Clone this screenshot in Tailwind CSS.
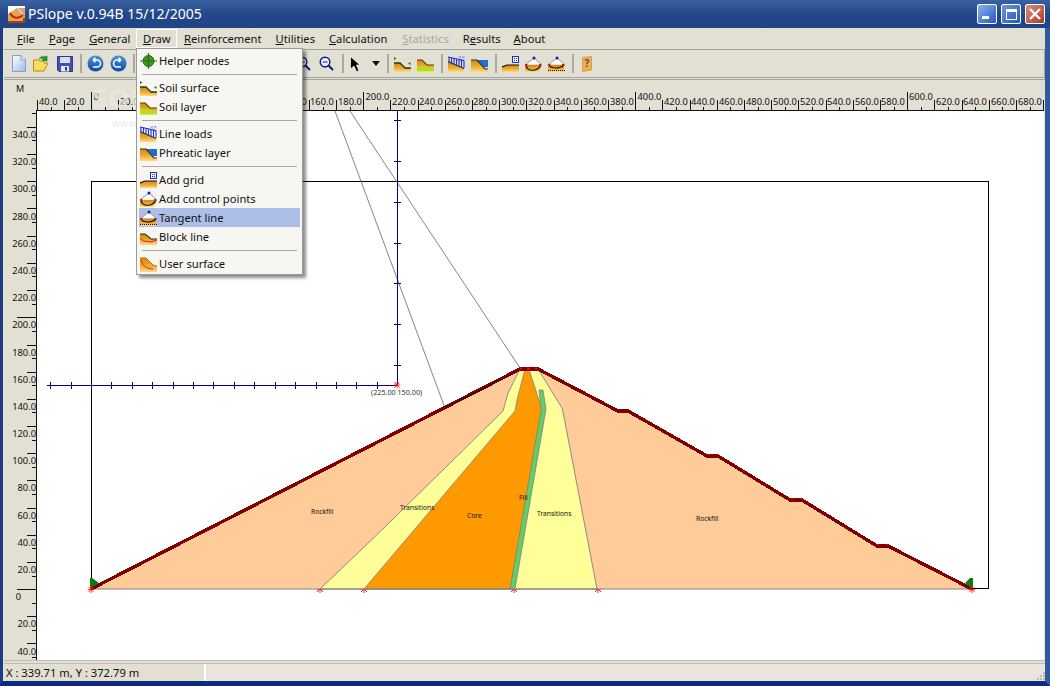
<!DOCTYPE html>
<html>
<head>
<meta charset="utf-8">
<script src="https://cdn.jsdelivr.net/npm/@tailwindcss/browser@4"></script>
</head>
<body class="w-[1050px] h-[686px] overflow-hidden bg-[#24478a] font-['Noto_Sans'] text-[#111]">
<svg width="0" height="0" class="absolute">
<defs>
<linearGradient id="g" x1="0" y1="0" x2="0" y2="1"><stop offset="0" stop-color="#d98606"/><stop offset=".6" stop-color="#f0ad3a"/><stop offset="1" stop-color="#fcdc8a"/></linearGradient>
<linearGradient id="bl" x1="0" y1="0" x2="0" y2="1"><stop offset="0" stop-color="#4c95df"/><stop offset="1" stop-color="#0d4aa6"/></linearGradient>
<linearGradient id="pg" x1="0" y1="0" x2="1" y2="1"><stop offset="0" stop-color="#fff"/><stop offset="1" stop-color="#9dbbe8"/></linearGradient>
<symbol id="surface" viewBox="0 0 17 16"><path d="M0 7H6L11 12H17V16H0Z" fill="url(#g)"/><path d="M0 7H6L11 12H17" fill="none" stroke="#27360e" stroke-width="1.300"/><path d="M0 1L2.500 2.500L0 4ZM16.500 6L14 7.500L16.500 9Z" fill="#0a8a0a"/></symbol>
<symbol id="layer" viewBox="0 0 17 16"><path d="M0 4H5L10 9H17V16H0Z" fill="url(#g)"/><path d="M0 4H5L10 9H17" fill="none" stroke="#5a3c10" stroke-width="1.200"/><path d="M0 10H9L12 12H17V15H0Z" fill="#b6de1c"/><path d="M0 15H17V16H0Z" fill="#e8e84a"/></symbol>
<symbol id="loads" viewBox="0 0 17 16"><path d="M0 6L16 13V16H0Z" fill="url(#g)"/><path d="M0 5.500L16 12.500" stroke="#27360e" fill="none" stroke-width="1.200"/><path d="M1 1.500V6M3.500 2V7M6 2.500V8M8.500 3V9M11 3.500V10M13.500 4V11M16 4.500V12M0 1L16 4.500" stroke="#1c2fe0" stroke-width="1.100" fill="none"/><path d="M10.500 0L13 2.500M13 0L10.500 2.500M14 0L16.500 2.500M16.500 0L14 2.500" stroke="#7f88f0" stroke-width=".8"/></symbol>
<symbol id="phreatic" viewBox="0 0 17 16"><path d="M0 4H6L15 14H17V16H0Z" fill="url(#g)"/><path d="M6 4H17V11H13Z" fill="#1d6fd6"/><path d="M0 4H6L14 13H17" fill="none" stroke="#27360e" stroke-width="1.200"/></symbol>
<symbol id="grid" viewBox="0 0 17 16"><path d="M0 11L5 9H17V16H0Z" fill="url(#g)"/><path d="M0 11L5 9H17" fill="none" stroke="#111" stroke-width="1.200"/><rect x="10.500" y=".5" width="6" height="6" fill="#f4f6ff" stroke="#1c2fd0"/><path d="M12 2h1v1h-1zM14 2h1v1h-1zM12 4h1v1h-1zM14 4h1v1h-1z" fill="#1c2fd0"/></symbol>
<symbol id="ctrl" viewBox="0 0 17 16"><path d="M0 9H16V12L13 16H1L0 15Z" fill="url(#g)"/><path d="M1 9C2 16 12 16 16 9" fill="none" stroke="#111" stroke-width="1.200"/><path d="M1 8L9 2L16 8" fill="#fbfbf4" stroke="#999"/><circle cx="9" cy="2" r="1.500" fill="#1414d8"/><path d="M0 8h2.500v1.500H0zM14 8H16.500v1.500h-2.500z" fill="#e01818"/></symbol>
<symbol id="tangent" viewBox="0 0 17 16"><path d="M0 9H16V16H0Z" fill="url(#g)"/><path d="M1 9C3 13 12 13 16 9" fill="none" stroke="#111" stroke-width="1.100"/><path d="M0 14.500H17" stroke="#111" stroke-dasharray="1 1"/><path d="M1 8L9 2L16 8" fill="#fbfbf4" stroke="#999"/><circle cx="9" cy="2" r="1.500" fill="#1414d8"/><path d="M0 8h2.500v1.500H0zM14 8H16.500v1.500h-2.500z" fill="#e01818"/></symbol>
<symbol id="block" viewBox="0 0 17 16"><path d="M0 5H5L11 10H17V16H0Z" fill="url(#g)"/><path d="M0 5H5L11 10H17" fill="none" stroke="#27360e" stroke-width="1.200"/><path d="M0 9L4 12L11 13L17 11" fill="none" stroke="#e02020"/></symbol>
<symbol id="user" viewBox="0 0 17 16"><path d="M0 2H6L13 9L17 10V16H0Z" fill="url(#g)"/><path d="M0 2H6L13 9L17 10" fill="none" stroke="#a07820"/><path d="M1 4C3 10 7 13 13 13" fill="none" stroke="#e02020"/></symbol>
<symbol id="star" viewBox="-4 -4 8 8"><path d="M-3 -3L3 3M3 -3L-3 3M0 -4V4M-4 0H4" stroke="#f00" stroke-width=".9"/></symbol>
</defs>
</svg>

<div class="w-[1050px] h-[686px] flex flex-col relative">
  <!-- title bar -->
  <div class="h-[28px] shrink-0 flex items-center bg-gradient-to-b from-[#3a629f] via-[#24478a] to-[#1f4488] pl-[8px] pr-[5px]">
    <svg width="17" height="17" viewBox="0 0 17 17" class="shrink-0"><rect width="17" height="17" fill="#e9a154"/><path d="M0 8L9 2L17 2V0H0Z" fill="#fff"/><path d="M2 7C5 13 11 13 15 9" stroke="#c02810" stroke-width="2" fill="none"/><path d="M0 16L16 16L16 12" stroke="#a8400c" stroke-width="2" fill="none"/><path d="M9 2L15 8" stroke="#c8c8d0" stroke-width="2"/></svg>
    <span class="ml-[3px] text-[14px] text-white leading-none">PSlope v.0.94B 15/12/2005</span>
    <div class="ml-auto flex gap-[4px]">
      <div class="w-[20px] h-[20px] border border-white rounded-[2px] bg-gradient-to-br from-[#8fb0e6] to-[#1c5bc4] flex items-end pl-[4px] pb-[4px]"><div class="w-[7px] h-[3px] bg-white"></div></div>
      <div class="w-[20px] h-[20px] border border-white rounded-[2px] bg-gradient-to-br from-[#6f96dc] to-[#2058bc] flex items-center justify-center"><div class="w-[11px] h-[11px] border border-white border-t-[3px]"></div></div>
      <div class="w-[20px] h-[20px] border border-white rounded-[2px] bg-gradient-to-br from-[#d9907a] to-[#a8382a] flex items-center justify-center"><svg width="14" height="14" viewBox="0 0 14 14"><path d="M2 2L12 12M12 2L2 12" stroke="#fff" stroke-width="2.400"/></svg></div>
    </div>
  </div>

  <!-- client + window borders -->
  <div class="flex-1 flex border-l-[3px] border-l-[#1c3c80] border-r-[5px] border-r-[#2f5a9e] border-b-[5px] border-b-[#0f2a7a] bg-[#e2dfd3] min-h-0">
    <div class="flex-1 flex flex-col min-w-0 border-l border-l-[#e2dfd3]">
      <!-- menu bar -->
      <div class="h-[21px] shrink-0 flex items-center pl-[6px] text-[11.2px] leading-none">
        <span class="px-[7px]"><u>F</u>ile</span>
        <span class="px-[7px]"><u>P</u>age</span>
        <span class="px-[7px]"><u>G</u>eneral</span>
        <span class="ml-[-1px] px-[5.5px] h-[19px] flex items-center border border-white"><span><u>D</u>raw</span></span>
        <span class="px-[7px]"><u>R</u>einforcement</span>
        <span class="px-[7px]"><u>U</u>tilities</span>
        <span class="px-[7px]"><u>C</u>alculation</span>
        <span class="ml-[1px] px-[7px] text-[#a9a8a3]"><u>S</u>tatistics</span>
        <span class="px-[7px]">R<u>e</u>sults</span>
        <span class="ml-[-1px] px-[7px]"><u>A</u>bout</span>
      </div>
      <!-- toolbar -->
      <div class="h-[29px] shrink-0 border border-[#a5a39d] border-l-0 flex items-center pl-[8px]">
        <svg width="14" height="17" viewBox="0 0 14 17"><path d="M.5.500H9L13.500 5V16.500H.5Z" fill="url(#pg)" stroke="#7f9ed6"/><path d="M9 .5V5H13.500" fill="#dfe9fb" stroke="#7f9ed6"/></svg>
        <svg width="16" height="17" viewBox="0 0 16 17" class="ml-[7px]"><path d="M.5 5H6L7 6H11V8H15L11 16H.5Z" fill="#fbdc5e" stroke="#b88a10"/><path d="M6 4C8 1 11 1 12 2L14 1V6L9 5L11 3.500" fill="#1c9a2c" stroke="#106a1c" stroke-width=".6"/></svg>
        <svg width="16" height="16" viewBox="0 0 16 16" class="ml-[8px]"><path d="M.5.500H15.500V15.500H2L.5 14Z" fill="#4050b4" stroke="#2c3890"/><rect x="3" y="1" width="10" height="6" fill="#d8dcf0"/><rect x="4" y="10" width="8" height="5.500" fill="#e8e8f0"/><rect x="8" y="11" width="2" height="3.500" fill="#2c3890"/></svg>
        <div class="w-[2px] h-[19px] bg-[#a9a8a3] ml-[7px]"></div>
        <svg width="17" height="17" viewBox="0 0 17 17" class="ml-[5px]"><circle cx="8.500" cy="8.500" r="8" fill="url(#bl)"/><path d="M6 5H10A3 3 0 0 1 10 12H6M6 5L8.500 2.800M6 5L8.500 7.200" stroke="#fff" stroke-width="1.500" fill="none"/></svg>
        <svg width="17" height="17" viewBox="0 0 17 17" class="ml-[6px]"><circle cx="8.500" cy="8.500" r="8" fill="url(#bl)"/><path d="M11 5H7A3 3 0 0 0 7 12H11M11 5L8.500 2.800M11 5L8.500 7.200" stroke="#fff" stroke-width="1.500" fill="none"/></svg>
        <div class="w-[2px] h-[19px] bg-[#a9a8a3] ml-[6px]"></div>
        <svg width="15" height="15" viewBox="0 0 15 15" class="ml-[161px]"><circle cx="6" cy="6" r="4.800" fill="#eef" stroke="#0c1a80" stroke-width="1.400"/><path d="M9.500 9.500L14 14" stroke="#0c1a80" stroke-width="2"/><path d="M3.500 6H8.500M6 3.500V8.500" stroke="#0c1a80"/></svg>
        <svg width="15" height="15" viewBox="0 0 15 15" class="ml-[8px]"><circle cx="6" cy="6" r="4.800" fill="#eef" stroke="#0c1a80" stroke-width="1.400"/><path d="M9.500 9.500L14 14" stroke="#0c1a80" stroke-width="2"/><path d="M3.500 6H8.500" stroke="#0c1a80"/></svg>
        <div class="w-[2px] h-[19px] bg-[#a9a8a3] ml-[8px]"></div>
        <svg width="11" height="16" viewBox="0 0 11 16" class="ml-[6px]"><path d="M.5.500L10 9H6.500L9 15L6.500 15.500L4 10L.5 13Z" fill="#000" stroke="#fff" stroke-width=".7"/></svg>
        <svg width="8" height="5" viewBox="0 0 8 5" class="ml-[11px]"><path d="M0 0H8L4 5Z" fill="#111"/></svg>
        <div class="w-[2px] h-[19px] bg-[#a9a8a3] ml-[7px]"></div>
        <svg width="17" height="16" class="ml-[5px]"><use href="#surface"/></svg>
        <svg width="17" height="16" class="ml-[6px]"><use href="#layer"/></svg>
        <div class="w-[2px] h-[19px] bg-[#a9a8a3] ml-[7px]"></div>
        <svg width="17" height="16" class="ml-[5px]"><use href="#loads"/></svg>
        <svg width="17" height="16" class="ml-[6px]"><use href="#phreatic"/></svg>
        <div class="w-[2px] h-[19px] bg-[#a9a8a3] ml-[7px]"></div>
        <svg width="17" height="16" class="ml-[5px]"><use href="#grid"/></svg>
        <svg width="17" height="16" class="ml-[6px]"><use href="#ctrl"/></svg>
        <svg width="17" height="16" class="ml-[6px]"><use href="#tangent"/></svg>
        <div class="w-[2px] h-[19px] bg-[#a9a8a3] ml-[7px]"></div>
        <svg width="10" height="16" viewBox="0 0 10 16" class="ml-[8px]"><path d="M.5 1.500L9.500.500V14L.5 15.500Z" fill="#f0b050" stroke="#e0a040"/><text x="2.500" y="11" font-size="10" font-weight="700" fill="#5a4a70">?</text></svg>
      </div>
      <div class="h-[2px] shrink-0 border-b border-[#a5a39d]"></div>

      <!-- ruler + canvas -->
      <div class="flex-1 flex flex-col min-h-0 relative">
        <div class="h-[31px] shrink-0 flex">
          <div class="w-[32px] shrink-0 relative"><span class="absolute left-[12px] top-[2px] text-[9px] leading-[14px]">M</span></div>
          <svg width="1008" height="31" viewBox="36 80 1008 31" class="block shrink-0" font-size="9.300" fill="#111">
            <path shape-rendering="crispEdges" stroke="#111" fill="none" d="M37.500 100V110M64.500 100V110M91.500 92V110M118.500 100V110M146.500 100V110M173.500 100V110M200.500 100V110M227.500 100V110M254.500 100V110M282.500 100V110M309.500 100V110M336.500 100V110M363.500 92V110M390.500 100V110M418.500 100V110M445.500 100V110M472.500 100V110M499.500 100V110M526.500 100V110M554.500 100V110M581.500 100V110M608.500 100V110M635.500 92V110M662.500 100V110M690.500 100V110M717.500 100V110M744.500 100V110M771.500 100V110M798.500 100V110M826.500 100V110M853.500 100V110M880.500 100V110M907.500 92V110M934.500 100V110M962.500 100V110M989.500 100V110M1016.500 100V110M1043.500 100V110M51.500 107V110M78.500 107V110M105.500 107V110M132.500 107V110M159.500 107V110M187.500 107V110M214.500 107V110M241.500 107V110M268.500 107V110M295.500 107V110M323.500 107V110M350.500 107V110M377.500 107V110M404.500 107V110M431.500 107V110M458.500 107V110M486.500 107V110M513.500 107V110M540.500 107V110M567.500 107V110M594.500 107V110M622.500 107V110M649.500 107V110M676.500 107V110M703.500 107V110M730.500 107V110M758.500 107V110M785.500 107V110M812.500 107V110M839.500 107V110M866.500 107V110M894.500 107V110M921.500 107V110M948.500 107V110M975.500 107V110M1002.500 107V110M1030.500 107V110"/>
            <path shape-rendering="crispEdges" d="M36 110H1044V111H36Z" fill="#111"/>
            <text x="39" y="105">40.0</text><text x="66" y="105">20.0</text><text x="93.500" y="99.500">0</text><text x="120" y="105">20.0</text><text x="148" y="105">40.0</text><text x="175" y="105">60.0</text><text x="202" y="105">80.0</text>
            <text x="229" y="105">100.0</text><text x="256" y="105">120.0</text><text x="283" y="105">140.0</text><text x="310" y="105">160.0</text><text x="338" y="105">180.0</text><text x="365.500" y="99.500">200.0</text><text x="392" y="105">220.0</text><text x="419" y="105">240.0</text><text x="446" y="105">260.0</text><text x="473" y="105">280.0</text><text x="501" y="105">300.0</text><text x="528" y="105">320.0</text><text x="555" y="105">340.0</text><text x="583" y="105">360.0</text><text x="610" y="105">380.0</text><text x="637.500" y="99.500">400.0</text><text x="664" y="105">420.0</text><text x="691" y="105">440.0</text><text x="719" y="105">460.0</text><text x="746" y="105">480.0</text><text x="773" y="105">500.0</text><text x="800" y="105">520.0</text><text x="827" y="105">540.0</text><text x="855" y="105">560.0</text><text x="881" y="105">580.0</text><text x="909" y="99.500">600.0</text><text x="936" y="105">620.0</text><text x="963" y="105">640.0</text><text x="991" y="105">660.0</text><text x="1018" y="105">680.0</text>
          </svg>
        </div>
        <div class="flex-1 flex min-h-0">
          <svg width="32" height="549" viewBox="4 111 32 549" class="block shrink-0" font-size="9.300" fill="#111" text-anchor="end">
            <path shape-rendering="crispEdges" stroke="#111" fill="none" d="M27 127.500H36M27 154.500H36M27 181.500H36M27 208.500H36M27 236.500H36M27 263.500H36M27 290.500H36M17 317.500H36M27 345.500H36M27 372.500H36M27 399.500H36M27 426.500H36M27 453.500H36M27 480.500H36M27 508.500H36M27 535.500H36M27 562.500H36M17 589.500H36M27 616.500H36M27 643.500H36M32 113.500H36M32 140.500H36M32 168.500H36M32 195.500H36M32 222.500H36M32 249.500H36M32 276.500H36M32 304.500H36M32 331.500H36M32 358.500H36M32 385.500H36M32 412.500H36M32 440.500H36M32 467.500H36M32 494.500H36M32 521.500H36M32 548.500H36M32 576.500H36M32 603.500H36M32 630.500H36M32 657.500H36"/>
            <text x="36" y="138">340.0</text><text x="36" y="165">320.0</text><text x="36" y="192">300.0</text><text x="36" y="219.500">280.0</text><text x="36" y="247">260.0</text><text x="36" y="274">240.0</text><text x="36" y="301">220.0</text><text x="36" y="328">200.0</text><text x="36" y="356">180.0</text><text x="36" y="383">160.0</text><text x="36" y="410">140.0</text><text x="36" y="437">120.0</text><text x="36" y="464">100.0</text><text x="36" y="491">80.0</text><text x="36" y="519">60.0</text><text x="36" y="546">40.0</text><text x="36" y="573">20.0</text><text x="21" y="600">0</text><text x="36" y="627">20.0</text><text x="36" y="654.500">40.0</text>
          </svg>
          <svg width="1008" height="549" viewBox="36 111 1008 549" class="block shrink-0 bg-white" font-size="6.700" fill="#111">
            <path d="M36 111V660" stroke="#111" stroke-width="1.500" shape-rendering="crispEdges"/>
            <rect x="91.500" y="181.500" width="897" height="407" fill="none" stroke="#000" stroke-width="1.200" shape-rendering="crispEdges"/>
            <path d="M335 111L445 408M350 111L520 368" stroke="#666" stroke-width=".8" fill="none"/>
            <!-- base points sit behind the materials, so only their lower half shows -->
            <use href="#star" x="316" y="585" width="8" height="8"/><use href="#star" x="360" y="585" width="8" height="8"/><use href="#star" x="510" y="585" width="8" height="8"/><use href="#star" x="594" y="585" width="8" height="8"/>
            <!-- materials -->
            <path d="M91 589L520 369H538L618 411H628L707 456H718L790 500H802L877 546H888L972 589Z" fill="#ffcc99"/>
            <path d="M320 589L360 551L390 522L503 411L508 393L520 369H538L562 408L564 417L597 589Z" fill="#ffff99" stroke="#808080" stroke-width=".9"/>
            <path d="M364 589L515 411L517 400L525 369H529L542 410L540 430L510 589Z" fill="#ff9900" stroke="#808080" stroke-width=".8"/>
            <path d="M539 390H543L546 409L515 589H510L541 410Z" fill="#66cc66" stroke="#808080" stroke-width=".8"/>
            <path d="M91 589H972" stroke="#808080" stroke-width="1.200"/>
            <path d="M91 589L520 369H538L618 411H628L707 456H718L790 500H802L877 546H888L972 589" fill="none" stroke="#800000" stroke-width="3.400" shape-rendering="crispEdges"/>
            <path d="M445 408L510 375" stroke="#111" stroke-width="1.200" stroke-dasharray="3 1" fill="none"/>
            <!-- axes -->
            <g stroke="#000080" fill="none" shape-rendering="crispEdges">
              <path d="M397.500 111V385.500H47" stroke-width="1.200"/>
              <path d="M394 120.500H401M394 161.500H401M394 202.500H401M394 243.500H401M394 283.500H401M394 324.500H401M394 365.500H401M50.500 382V389M71.500 382V389M91.500 382V389M111.500 382V389M132.500 382V389M152.500 382V389M173.500 382V389M193.500 382V389M213.500 382V389M234.500 382V389M254.500 382V389M275.500 382V389M295.500 382V389M316.500 382V389M336.500 382V389M356.500 382V389M377.500 382V389"/>
            </g>
            <text x="371" y="395" font-size="7.200" fill="#333">(225.00 150.00)</text>
            <text x="311" y="513.500">Rockfill</text><text x="400" y="510">Transitions</text><text x="467" y="518">Core</text><text x="519" y="499.500">Fill</text><text x="537" y="516">Transitions</text><text x="696" y="521">Rockfill</text>
            <!-- supports -->
            <path d="M90 578H92V588H90ZM92 578L99 583L92 587Z" fill="#0a7a0a"/>
            <path d="M970 578H973V588H970ZM970 578L965 583L970 587Z" fill="#0a7a0a"/>
            <use href="#star" x="87.500" y="586" width="7" height="7"/><use href="#star" x="968.500" y="586" width="7" height="7"/><use href="#star" x="393.500" y="381.500" width="7" height="7"/>
            <path d="M520 367.500h2v2h-2zM527 367.500h3v2h-3zM535 367.500h2v2h-2zM708 454h2v1h-2zM717 454h2v1h-2zM791 498h2v1h-2zM800 498h2v1h-2zM877 544h2v1h-2zM886 544h2v1h-2z" fill="#f00"/>
          </svg>
        </div>
        <!-- watermark -->
        <span class="absolute left-[88px] top-[4px] text-[27px] leading-none font-bold tracking-[1px] text-[#ebe9e1] opacity-70">SOFTPEDIA</span>
        <span class="absolute left-[108px] top-[38px] text-[10px] leading-none tracking-[.5px] text-[#eaeaea]">www.softpedia.com</span>
      </div>
      <!-- status bar -->
      <div class="h-[21px] shrink-0 flex border-t-[4px] border-double border-t-[#bdbbb2] text-[11.2px]">
        <div class="w-[202px] flex items-center pl-[2px] border-r-2 border-r-white leading-none">X : 339.71 m, Y : 372.79 m</div>
        <div class="flex-1 bg-[#e8e6de] relative">
          <svg width="10" height="10" viewBox="0 0 10 10" class="absolute right-0 bottom-0"><path d="M8 1h2v2H8zM5 4h2v2H5zM8 4h2v2H8zM2 7h2v2H2zM5 7h2v2H5zM8 7h2v2H8z" fill="#bdbbb2"/></svg>
        </div>
      </div>
    </div>
  </div>

  <!-- dropdown -->
  <div class="absolute left-[136px] top-[48px] w-[167px] h-[227px] bg-[#f7f6f2] border border-[#9a9a96] shadow-[3px_3px_3px_rgba(0,0,0,.45)] p-[2px] text-[11.2px] leading-none">
    <div class="h-[19px] flex items-center"><svg width="17" height="16" viewBox="0 0 17 16" class="ml-[1px] mr-[2px] shrink-0"><circle cx="8.500" cy="8" r="5.500" fill="#3f9a20" stroke="#1e6a10"/><path d="M8.500 0V16M0 8H17" stroke="#2a6a18" stroke-width="1.200"/></svg><span>Helper nodes</span></div>
    <div class="h-[8px] flex items-center mx-[3px]"><div class="w-full h-px bg-[#a9a8a3]"></div></div>
    <div class="h-[19px] flex items-center"><svg width="17" height="16" class="ml-[1px] mr-[2px] shrink-0"><use href="#surface"/></svg><span>Soil surface</span></div>
    <div class="h-[19px] flex items-center"><svg width="17" height="16" class="ml-[1px] mr-[2px] shrink-0"><use href="#layer"/></svg><span>Soil layer</span></div>
    <div class="h-[8px] flex items-center mx-[3px]"><div class="w-full h-px bg-[#a9a8a3]"></div></div>
    <div class="h-[19px] flex items-center"><svg width="17" height="16" class="ml-[1px] mr-[2px] shrink-0"><use href="#loads"/></svg><span>Line loads</span></div>
    <div class="h-[19px] flex items-center"><svg width="17" height="16" class="ml-[1px] mr-[2px] shrink-0"><use href="#phreatic"/></svg><span>Phreatic layer</span></div>
    <div class="h-[8px] flex items-center mx-[3px]"><div class="w-full h-px bg-[#a9a8a3]"></div></div>
    <div class="h-[19px] flex items-center"><svg width="17" height="16" class="ml-[1px] mr-[2px] shrink-0"><use href="#grid"/></svg><span>Add grid</span></div>
    <div class="h-[19px] flex items-center"><svg width="17" height="16" class="ml-[1px] mr-[2px] shrink-0"><use href="#ctrl"/></svg><span>Add control points</span></div>
    <div class="h-[19px] flex items-center bg-[#adbfe8]"><svg width="17" height="16" class="ml-[1px] mr-[2px] shrink-0"><use href="#tangent"/></svg><span>Tangent line</span></div>
    <div class="h-[19px] flex items-center"><svg width="17" height="16" class="ml-[1px] mr-[2px] shrink-0"><use href="#block"/></svg><span>Block line</span></div>
    <div class="h-[8px] flex items-center mx-[3px]"><div class="w-full h-px bg-[#a9a8a3]"></div></div>
    <div class="h-[19px] flex items-center"><svg width="17" height="16" class="ml-[1px] mr-[2px] shrink-0"><use href="#user"/></svg><span>User surface</span></div>
  </div>
</div>
</body>
</html>
